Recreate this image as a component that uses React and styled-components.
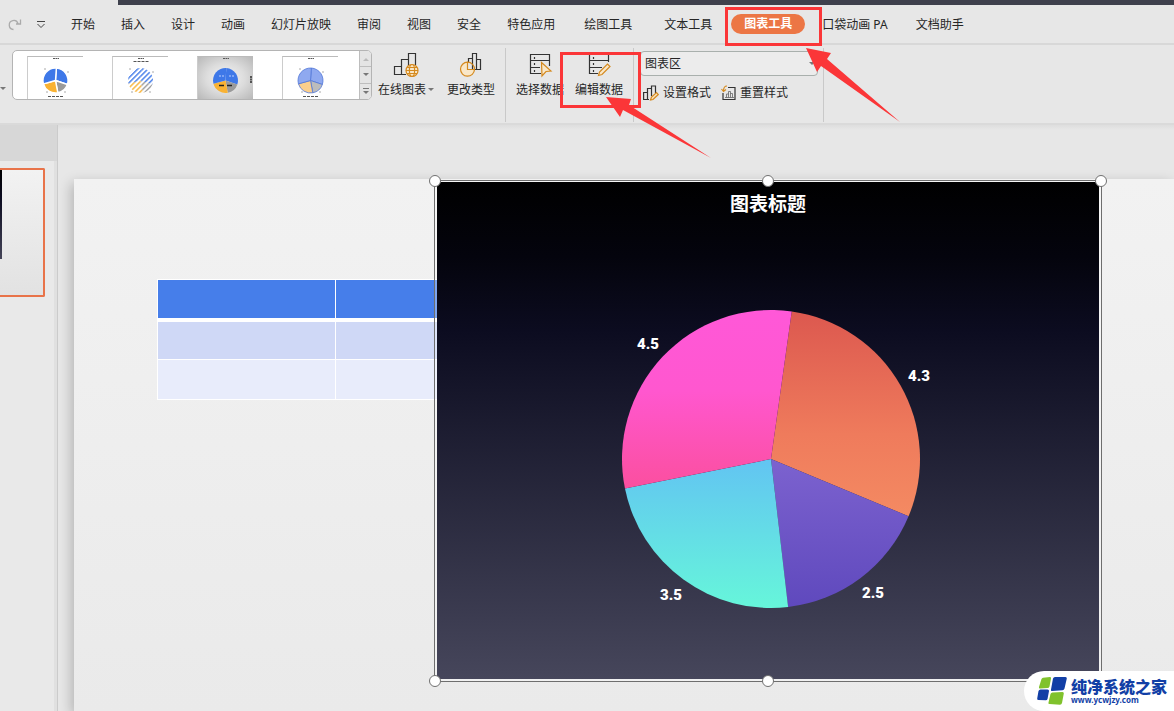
import React from "react";
import styled, { createGlobalStyle } from "styled-components";

const GlobalStyle = createGlobalStyle`
  * {
    box-sizing: border-box;
  }
  body {
    margin: 0;
    background: #e7e7e7;
    font-family: "Noto Sans", "Noto Sans CJK SC", sans-serif;
    font-size: 12px;
    color: #262626;
  }
  button,
  select {
    font: inherit;
    color: inherit;
  }
`;

const Window = styled.div`
  position: relative;
  display: flex;
  flex-direction: column;
  min-height: 100vh;
  overflow: hidden;
`;

const TitleBar = styled.div`
  height: 5px;
  margin-left: 118px;
  background: #3f414d;
`;

const MenuBar = styled.nav`
  display: flex;
  align-items: center;
  height: 40px;
  padding-left: 8px;
  border-bottom: 2px solid #d8d8d8;
`;

const QuickAccess = styled.div`
  display: flex;
  gap: 14px;
  width: 50px;
`;

const QuickButton = styled.button`
  display: flex;
  padding: 0;
  border: 0;
  background: none;
`;

const Tab = styled.button`
  flex: none;
  padding: 2px ${(p) => p.$space || 13}px 0;
  border: 0;
  background: none;
  line-height: 20px;
  white-space: nowrap;
`;

const ActiveTab = styled(Tab)`
  padding: 0 3px;
`;

const Pill = styled.span`
  display: block;
  padding: 0 13px;
  border-radius: 10px;
  background: #ec7645;
  color: #fff;
  font-weight: 700;
`;

const Ribbon = styled.section`
  display: flex;
  height: 80px;
  padding-top: 3px;
  border-bottom: 2px solid #dadada;
`;

const CaretButton = styled.button`
  flex: none;
  display: flex;
  align-items: center;
  width: 12px;
  height: 81px;
  padding: 0;
  border: 0;
  background: none;
  overflow: hidden;
`;

const Gallery = styled.div`
  flex: none;
  display: flex;
  width: 360px;
  height: 50px;
  margin-top: 2px;
  border: 1px solid #b4b4b4;
  border-radius: 5px;
  background: #fff;
  overflow: hidden;
`;

const Previews = styled.div`
  flex: 1;
  display: flex;
  gap: 29px;
  padding: 5px 0 0 14px;
`;

const Preview = styled.button`
  width: 56px;
  padding: 0;
  border: 0;
  border-top: 1px solid #bbb;
  border-left: 1px solid #ccc;
  background: ${(p) =>
    p.$dark ? "radial-gradient(#f5f5f5, #dcdcdc 50%, #b8b8b8)" : "#fff"};
`;

const Scroller = styled.div`
  display: flex;
  flex-direction: column;
  width: 12px;
  border-left: 1px solid #bdbdbd;
  background: #e4e4e4;
`;

const ScrollButton = styled.button`
  flex: 1;
  display: grid;
  place-items: center;
  padding: 0;
  border: 0;
  background: none;
  & + & {
    border-top: 1px solid #bdbdbd;
  }
`;

const Group = styled.div`
  flex: none;
  display: flex;
  align-items: flex-start;
  height: 74px;
  padding: ${(p) => p.$pad || "0 10px"};
  gap: ${(p) => p.$gap || 0}px;
  border-right: 1px solid #c9c9c9;
`;

const Tool = styled.button`
  display: flex;
  flex-direction: column;
  align-items: center;
  padding: 4px 0 0;
  border: 0;
  background: none;
  line-height: 20px;
  white-space: nowrap;
  svg {
    margin-bottom: 2px;
  }
`;

const ToolLabel = styled.span`
  display: flex;
  align-items: center;
  gap: 2px;
  svg {
    margin: 0;
  }
`;

const FormatGroup = styled.div`
  flex: none;
  width: 190px;
  height: 74px;
  padding: 3px 5px 0 6px;
  border-right: 1px solid #c9c9c9;
`;

const SelectBox = styled.label`
  position: relative;
  display: block;
  svg {
    position: absolute;
    right: 3px;
    top: 11px;
  }
`;

const AreaSelect = styled.select`
  appearance: none;
  width: 100%;
  height: 25px;
  padding: 0 4px;
  border: 1px solid #a9b0ad;
  border-radius: 4px;
  background: #ececec;
`;

const FormatRow = styled.div`
  display: flex;
  gap: 10px;
  padding: 7px 0 0 3px;
`;

const SmallTool = styled.button`
  display: flex;
  align-items: center;
  gap: 4px;
  padding: 0;
  border: 0;
  background: none;
  line-height: 20px;
  white-space: nowrap;
`;

const Workspace = styled.main`
  flex: 1;
  display: flex;
`;

const SlideList = styled.aside`
  flex: none;
  width: 58px;
  padding-top: 36px;
  background: #d7d7d7;
  border-right: 1px solid #cbcbcb;
`;

const SlideListBody = styled.div`
  height: 100%;
  padding-top: 7px;
  background: #e9e9e9;
  border-right: 3px solid #e0e0e0;
`;

const Thumbnail = styled.button`
  display: block;
  width: 45px;
  height: 129px;
  padding: 0;
  border: 2px solid #e87349;
  border-left: 0;
  border-radius: 0 2px 2px 0;
  background: linear-gradient(#f2f2f2, #e2e2e2);
`;

const ThumbnailChart = styled.span`
  display: block;
  width: 2px;
  height: 89px;
  margin-bottom: 36px;
  background: linear-gradient(#000, #0b0b1f 30%, #444458);
`;

const Canvas = styled.div`
  flex: 1;
  display: flex;
  min-width: 0;
  padding: 54px 0 0 16px;
  background: linear-gradient(#dedede, #e7e7e7 5px);
`;

const Slide = styled.div`
  position: relative;
  flex: 1;
  min-height: 532px;
  background: linear-gradient(#f2f2f2, #eaeaea);
  box-shadow: -3px 4px 12px rgba(0, 0, 0, 0.22);
`;

const SlideTable = styled.table`
  position: absolute;
  left: 83px;
  top: 100px;
  width: 535px;
  border-collapse: collapse;
  table-layout: fixed;
`;

const Cell = styled.td`
  height: 40px;
  padding: 0;
  border: 1px solid #fff;
  background: ${(p) => p.$fill};
`;

const HeadCell = styled.th`
  height: 40px;
  padding: 0;
  border: 1px solid #fff;
  border-bottom-width: 4px;
  background: #467eea;
`;

const ChartFrame = styled.figure`
  position: absolute;
  left: 360px;
  top: 1px;
  width: 668px;
  height: 502px;
  margin: 0;
  padding: 1px 2px 2px;
  border: 1px solid #6e6e6e;
  background: rgba(255, 255, 255, 0.3);
`;

const ChartArea = styled.div`
  display: flex;
  flex-direction: column;
  align-items: center;
  height: 100%;
  padding-top: 8px;
  background: linear-gradient(#000, #04040d 15%, #0c0c20 30%, #46465b);
`;

const ChartTitle = styled.figcaption`
  color: #fff;
  font-size: 19px;
  line-height: 28px;
  font-weight: 700;
`;

const PieSvg = styled.svg`
  margin-top: 63px;
  text {
    fill: #fff;
    font: 900 15px Roboto, "Liberation Sans", sans-serif;
    text-anchor: middle;
  }
`;

const Handle = styled.span`
  position: absolute;
  left: ${(p) => p.$x};
  top: ${(p) => p.$y};
  width: 12px;
  height: 12px;
  margin: -6px;
  border: 1px solid #707070;
  border-radius: 50%;
  background: #fff;
`;

const Highlight = styled.div`
  position: absolute;
  left: ${(p) => p.$x}px;
  top: ${(p) => p.$y}px;
  width: ${(p) => p.$w}px;
  height: ${(p) => p.$h}px;
  border: 3px solid #fb3638;
  pointer-events: none;
`;

const Arrows = styled.svg`
  position: absolute;
  left: 0;
  top: 0;
  pointer-events: none;
`;

const Watermark = styled.a`
  position: absolute;
  right: 0;
  bottom: 0;
  display: flex;
  align-items: center;
  gap: 4px;
  height: 40px;
  padding: 0 7px 0 13px;
  border-radius: 20px 0 0 20px;
  background: #fff;
  color: #123fa6;
  font-weight: 700;
  text-decoration: none;
`;

const SiteName = styled.span`
  display: block;
  font-size: 16px;
  line-height: 17px;
  font-weight: 900;
`;

const SiteUrl = styled.span`
  display: block;
  font-size: 8px;
  line-height: 8px;
`;

const tabs = ["开始", "插入", "设计", "动画", "幻灯片放映", "审阅", "视图", "安全", "特色应用"];

const slices = [
  { value: 4.3, from: "#dc584f", to: "#f48a62", x: 305, y: 100 },
  { value: 2.5, from: "#7c62cf", to: "#5f49bd", x: 259, y: 317 },
  { value: 3.5, from: "#62c4f2", to: "#66f6da", x: 57, y: 319 },
  { value: 4.5, from: "#ff58d8", to: "#fb4f9f", x: 34, y: 68 },
];

const wedge = (cx, cy, r, a, b) => {
  const at = (deg) => {
    const t = ((deg - 90) * Math.PI) / 180;
    return `${(cx + r * Math.cos(t)).toFixed(2)} ${(cy + r * Math.sin(t)).toFixed(2)}`;
  };
  return `M${cx} ${cy}L${at(a)}A${r} ${r} 0 ${b - a > 180 ? 1 : 0} 1 ${at(b)}Z`;
};

const withAngles = (items, start) => {
  const total = items.reduce((sum, s) => sum + s.value, 0);
  let angle = start;
  return items.map((s) => {
    const a = angle;
    angle += (s.value / total) * 360;
    return { ...s, a, b: angle };
  });
};

function Pie() {
  return (
    <PieSvg width="308" height="360" overflow="visible" role="img" aria-label="图表标题">
      <defs>
        {slices.map((s, i) => (
          <linearGradient key={i} id={`slice${i}`} x1="0" y1="0" x2="0" y2="1">
            <stop offset="0" stopColor={s.from} />
            {i === 3 && <stop offset="0.45" stopColor="#ff57cf" />}
            {i === 0 && <stop offset="0.6" stopColor="#ef7b5c" />}
            <stop offset="1" stopColor={s.to} />
          </linearGradient>
        ))}
      </defs>
      {withAngles(slices, 8).map((s, i) => (
        <path key={i} d={wedge(157, 178, 149, s.a, s.b)} fill={`url(#slice${i})`} />
      ))}
      {slices.map((s) => (
        <text key={s.value} x={s.x} y={s.y}>{s.value}</text>
      ))}
    </PieSvg>
  );
}

const previewColors = ["#3e78e8", "#9a9a9a", "#f9b233", "#3e78e8"];
const softColors = ["#8fa9f0", "#bcbcbc", "#fbcf8c", "#8fa9f0"];

function PreviewPie({ kind }) {
  const parts = withAngles(slices, 4);
  const colors = kind === "soft" ? softColors : previewColors;
  const fill = (i) => (kind === "hatched" ? `url(#hatch${i})` : colors[i]);
  const stroke = { exploded: "#fff", soft: "#5277d8" }[kind] || "none";
  return (
    <svg width="55" height="42" display="block" aria-hidden="true">
      {kind === "hatched" && (
        <defs>
          {previewColors.map((c, i) => (
            <pattern key={i} id={`hatch${i}`} width="3.6" height="3.6" patternUnits="userSpaceOnUse" patternTransform="rotate(45)">
              <rect width="1.4" height="3.6" fill={c} />
            </pattern>
          ))}
        </defs>
      )}
      <path d="M25 1.5h6" stroke="#555" strokeDasharray="2 .5" />
      {parts.map((p, i) => (
        <path key={i} d={wedge(27.5, 23.5, 12.5, p.a, p.b)} fill={fill(i)} stroke={stroke} strokeWidth={kind === "exploded" ? 1.4 : 0.8} />
      ))}
      {kind === "dark" ? (
        <>
          <path d="M21 19h5M31 19h5" stroke="#bcd0ff" strokeDasharray="2 1" />
          <path d="M21 28.500h5M29 28.500h5" stroke="#222" strokeWidth="1.500" />
          <path d="M53 19v7" stroke="#555" strokeWidth="2" strokeDasharray="2 .5" />
        </>
      ) : (
        <>
          <path d="M16 12h2M39 15h2M18 35h2M36 35h2" stroke="#aaa" />
          <path d={kind === "hatched" ? "M20.500 4.500h16" : "M20 39.500h16"} stroke="#555" strokeDasharray="3 1" />
        </>
      )}
    </svg>
  );
}

const Caret = ({ up, color = "#777" }) => (
  <svg width="6" height="4" aria-hidden="true">
    <path d={up ? "M0 4L3 1L6 4Z" : "M0 0L3 3L6 0Z"} fill={color} />
  </svg>
);

const ToolIcon = ({ children }) => (
  <svg width="26" height="26" fill="none" stroke="#333" strokeWidth="1.200" aria-hidden="true">
    {children}
  </svg>
);

const OnlineChartIcon = () => (
  <ToolIcon>
    <path d="M13 22.500H1.500V14.500H8.500V22.500M8.500 14.500V7.500H15.500V14M15.500 7.500V1.500H22.500V13" />
    <g stroke="#d58a1f">
      <circle cx="19" cy="18.500" r="6" fill="#f9e7c8" />
      <ellipse cx="19" cy="18.500" rx="2.600" ry="6" />
      <path d="M13 18.500h12M14 15.500h10M14 21.500h10" />
    </g>
  </ToolIcon>
);

const ChangeTypeIcon = () => (
  <ToolIcon>
    <path d="M10.500 10V6.500H14.500V17.500M14.500 7V1.500H18.500V17.500M18.500 7.500H22.500V17.500H16" />
    <path d="M9.500 10.200A7 7 0 1 0 16.500 17.500H9.500Z" fill="#f9e7c8" stroke="#d58a1f" />
    <path d="M9.500 10.200A7 7 0 0 1 16.500 17.500" stroke="#d58a1f" />
  </ToolIcon>
);

const SelectDataIcon = () => (
  <ToolIcon>
    <path d="M14 21.500H3.500V2.500H22.500V14M3.500 8.500H22.500M3.500 15.500H13" />
    <path d="M7.500 5v2M7.500 11v2M7.500 18v2" />
    <path d="M14.500 10.500L24 19L19 19.500L15 24Z" fill="#f9e7c8" stroke="#d58a1f" />
  </ToolIcon>
);

const EditDataIcon = () => (
  <ToolIcon>
    <path d="M12 21.500H3.500V2.500H22.500V10M3.500 8.500H22.500M3.500 15.500H16" />
    <path d="M7.500 5v2M7.500 11v2M7.500 18v2" />
    <path d="M12.500 23.500L13.500 20L21.500 12L24 14.500L16 22.500Z" fill="#f9e7c8" stroke="#d58a1f" />
  </ToolIcon>
);

const FormatIcon = () => (
  <svg width="16" height="16" fill="none" stroke="#333" strokeWidth="1.200" aria-hidden="true">
    <path d="M6 14.500H.6V7.500H4.500V14M4.500 14.500V3.500H8.500V11M8.500 5V1H12.500V8" />
    <path d="M7.500 15L8.500 12L13.500 7.500L15.300 9.500L10 14.500Z" fill="#f9e0b8" stroke="#d58a1f" />
  </svg>
);

const ResetIcon = () => (
  <svg width="15" height="16" fill="none" stroke="#333" strokeWidth="1.200" aria-hidden="true">
    <path d="M7 2.500H14V14.500H2V8" />
    <path d="M5.500 12.500V9H7.500V12.500M7.500 9V6.500H9.500V12.500M9.500 8.500H11.500V12.500M4 12.500h9" stroke="#666" strokeWidth=".8" />
    <path d="M6 1C3.500 1 2.500 3 2.500 6M.5 4L2.500 6.500L5 4.500" stroke="#d58a1f" />
  </svg>
);

const SiteLogo = () => (
  <svg width="30" height="30" aria-hidden="true">
    <path d="M4.500 3Q5 2 6 1.800L13 1Q14.500 1 14 2.500L12.500 10.500Q12 12 10.500 12L3 12.500Q1.500 12.500 2 11Z" fill="#80c22c" />
    <path d="M16 2.500Q16.500 1 18 1H28.500Q30 1 29.800 2.500L27.500 12.500Q27 14 25.500 14.200L15 15Q13.500 15 14 13.500Z" fill="#123fa6" />
    <path d="M1.500 15Q2 13.700 3.500 13.500L10.500 13.500Q12.200 13.500 12 15L10.500 23Q10 24.500 8.500 24.300L1.500 24Q0 24 .2 22.500Z" fill="#123fa6" />
    <path d="M13.500 18Q14 16.500 15.500 16.500L25.500 16Q27 16 26.800 17.500L25 27Q24.500 28.500 23 28.800L12.500 28Q11 28 11.500 26.500Z" fill="#80c22c" />
  </svg>
);

export default function App() {
  return (
    <Window>
      <GlobalStyle />
      <TitleBar />
      <MenuBar>
        <QuickAccess>
          <QuickButton aria-label="重做">
            <svg width="14" height="13" fill="none" stroke="#aaa" strokeWidth="1.300">
              <path d="M5.500 11.500A4.500 4.500 0 1 1 10 5.500M12.500 1.500V6H8" />
            </svg>
          </QuickButton>
          <QuickButton aria-label="更多">
            <svg width="10" height="13" fill="none" stroke="#444">
              <path d="M1 3.500H9M1.500 6L5 9.500L8.500 6" />
            </svg>
          </QuickButton>
        </QuickAccess>
        {tabs.map((name) => (
          <Tab key={name}>{name}</Tab>
        ))}
        <Tab $space={16}>绘图工具</Tab>
        <Tab $space={16}>文本工具</Tab>
        <ActiveTab>
          <Pill>图表工具</Pill>
        </ActiveTab>
        <Tab $space={14}>口袋动画 PA</Tab>
        <Tab $space={14}>文档助手</Tab>
      </MenuBar>

      <Ribbon>
        <CaretButton aria-label="展开"><Caret /></CaretButton>
        <Gallery>
          <Previews>
            <Preview aria-label="样式 1"><PreviewPie kind="exploded" /></Preview>
            <Preview aria-label="样式 2"><PreviewPie kind="hatched" /></Preview>
            <Preview aria-label="样式 3" $dark><PreviewPie kind="dark" /></Preview>
            <Preview aria-label="样式 4"><PreviewPie kind="soft" /></Preview>
          </Previews>
          <Scroller>
            <ScrollButton aria-label="向上"><Caret up color="#bbb" /></ScrollButton>
            <ScrollButton aria-label="向下"><Caret /></ScrollButton>
            <ScrollButton aria-label="全部样式">
              <svg width="8" height="8">
                <path d="M1 1.500H7" stroke="#777" />
                <path d="M1 4L4 7L7 4Z" fill="#777" />
              </svg>
            </ScrollButton>
          </Scroller>
        </Gallery>
        <Group $pad="0 10px 0 6px" $gap={13}>
          <Tool>
            <OnlineChartIcon />
            <ToolLabel>在线图表<Caret /></ToolLabel>
          </Tool>
          <Tool><ChangeTypeIcon />更改类型</Tool>
        </Group>
        <Group $gap={11}>
          <Tool><SelectDataIcon />选择数据</Tool>
          <Tool><EditDataIcon />编辑数据</Tool>
        </Group>
        <FormatGroup>
          <SelectBox>
            <AreaSelect aria-label="图表元素" defaultValue="图表区">
              <option>图表区</option>
            </AreaSelect>
            <Caret />
          </SelectBox>
          <FormatRow>
            <SmallTool><FormatIcon />设置格式</SmallTool>
            <SmallTool><ResetIcon />重置样式</SmallTool>
          </FormatRow>
        </FormatGroup>
      </Ribbon>

      <Workspace>
        <SlideList>
          <SlideListBody>
            <Thumbnail aria-label="幻灯片 1"><ThumbnailChart /></Thumbnail>
          </SlideListBody>
        </SlideList>
        <Canvas>
          <Slide>
            <SlideTable>
              <thead>
                <tr><HeadCell /><HeadCell /><HeadCell /></tr>
              </thead>
              <tbody>
                {["#cfd8f6", "#e8ecfb"].map((fill) => (
                  <tr key={fill}>
                    <Cell $fill={fill} /><Cell $fill={fill} /><Cell $fill={fill} />
                  </tr>
                ))}
              </tbody>
            </SlideTable>
            <ChartFrame>
              <ChartArea>
                <ChartTitle>图表标题</ChartTitle>
                <Pie />
              </ChartArea>
              <Handle $x="0" $y="0" />
              <Handle $x="50%" $y="0" />
              <Handle $x="100%" $y="0" />
              <Handle $x="0" $y="100%" />
              <Handle $x="50%" $y="100%" />
              <Handle $x="100%" $y="100%" />
            </ChartFrame>
          </Slide>
        </Canvas>
      </Workspace>

      <Highlight $x={725} $y={7} $w={97} $h={39} />
      <Highlight $x={560} $y={52} $w={81} $h={56} />
      <Arrows width="910" height="170" fill="#fb3638" aria-hidden="true">
        <path d="M806 48L831 53L827 59L900 122L821 66L817 72Z" />
        <path d="M606 97L631 99L629 105L711 158L623 110L620 117Z" />
      </Arrows>

      <Watermark href="#">
        <SiteLogo />
        <span>
          <SiteName>纯净系统之家</SiteName>
          <SiteUrl>www.ycwjzy.com</SiteUrl>
        </span>
      </Watermark>
    </Window>
  );
}
